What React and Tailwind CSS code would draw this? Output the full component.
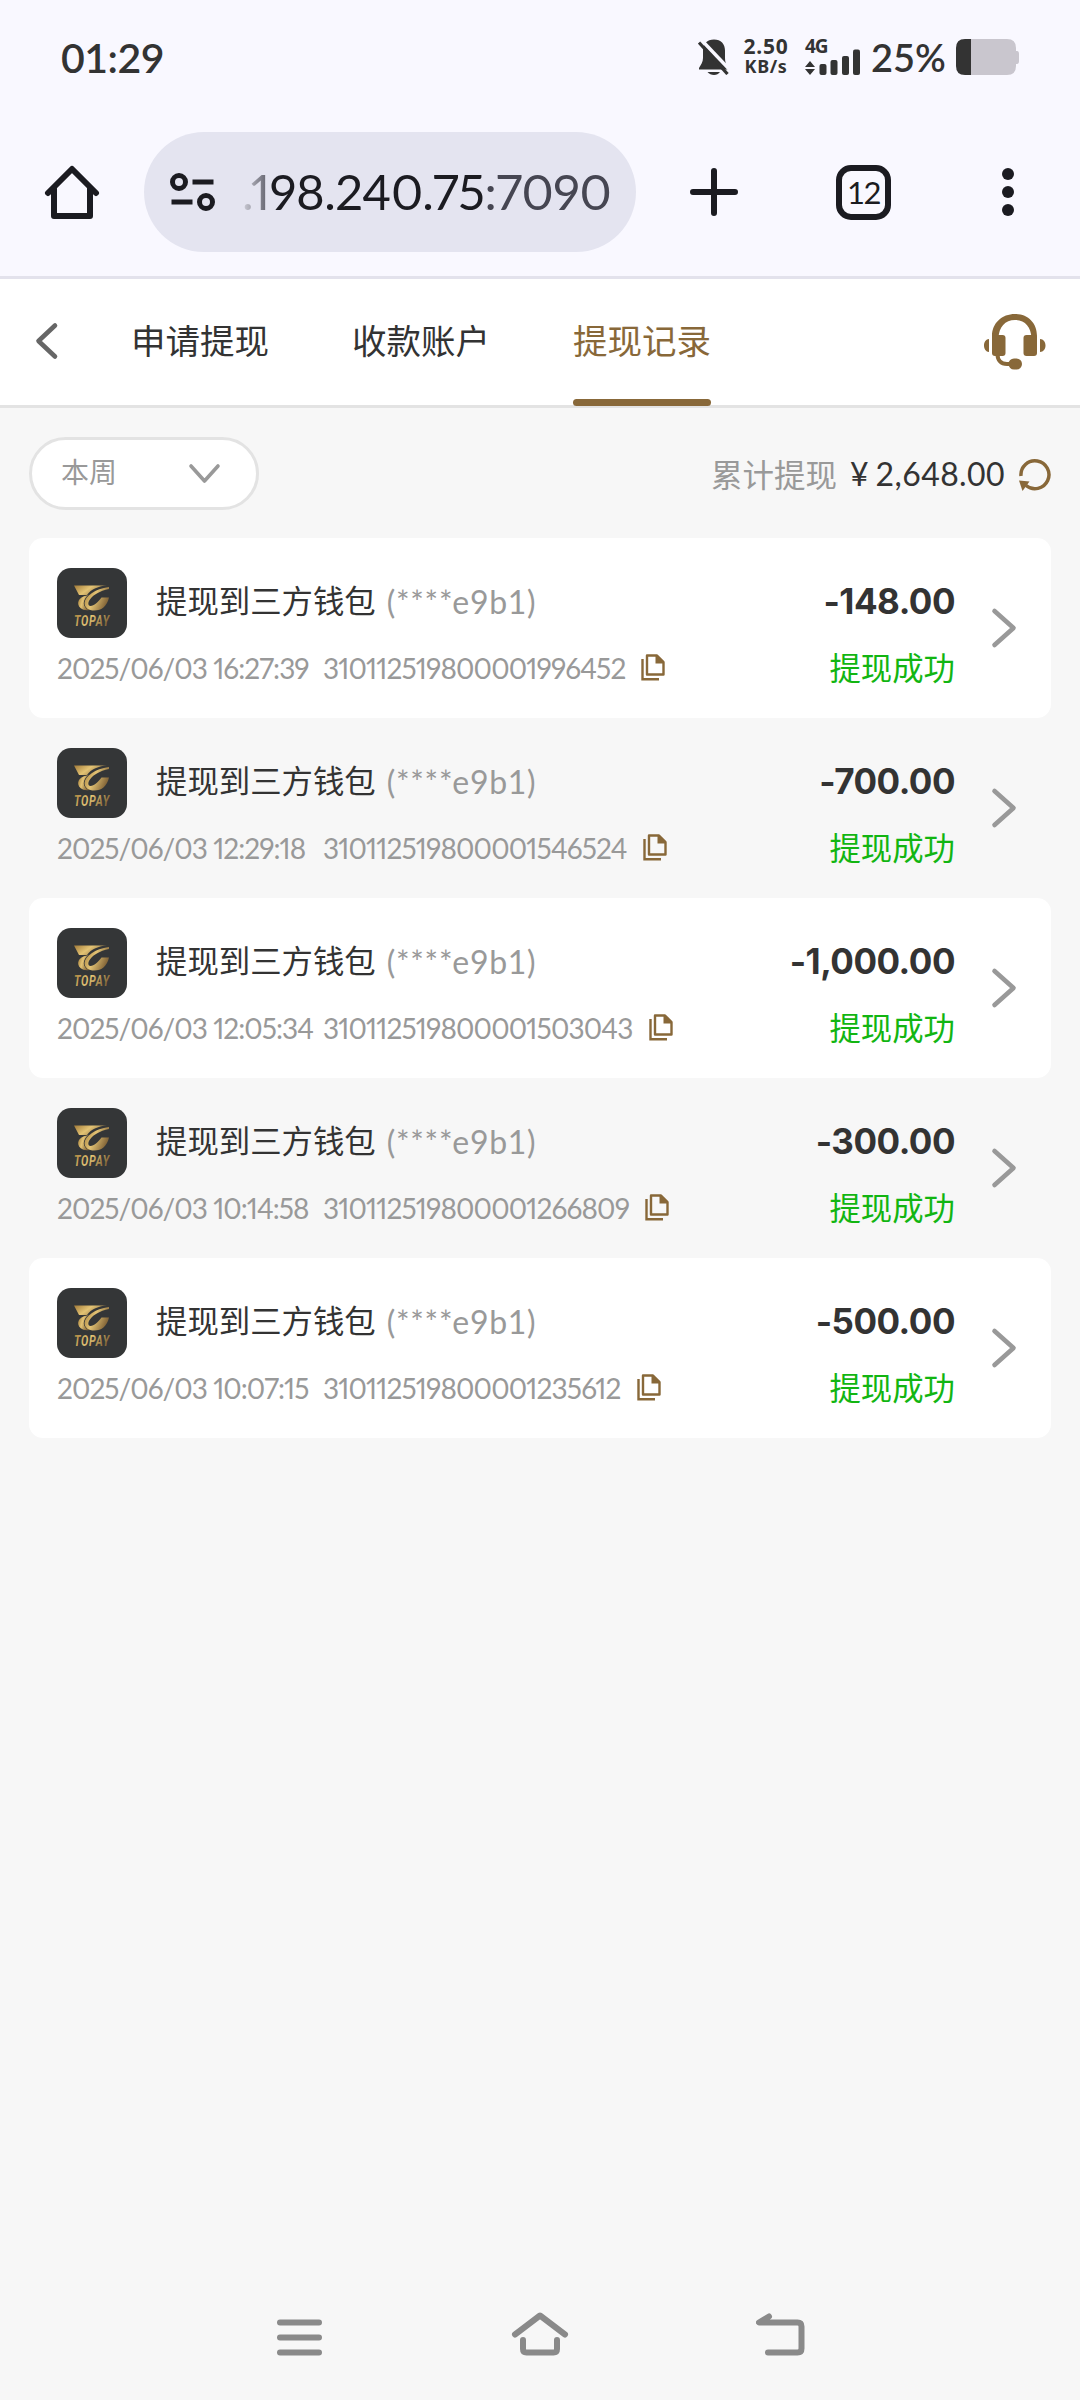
import { clsx } from "clsx";

const RECORDS = [
  { id: "310112519800001996452", time: "2025/06/03 16:27:39", amount: "-148.00" },
  { id: "310112519800001546524", time: "2025/06/03 12:29:18", amount: "-700.00" },
  { id: "310112519800001503043", time: "2025/06/03 12:05:34", amount: "-1,000.00" },
  { id: "310112519800001266809", time: "2025/06/03 10:14:58", amount: "-300.00" },
  { id: "310112519800001235612", time: "2025/06/03 10:07:15", amount: "-500.00" },
];

const TABS = ["申请提现", "收款账户", "提现记录"];

function StatusBar() {
  return (
    <div className="flex h-[114px] items-center pl-[61px] pr-[60px] text-[#333]">
      <span className="mt-px text-[41px] font-semibold leading-none tracking-[-0.5px] font-['Lato',sans-serif]">01:29</span>
      <div className="ml-auto flex h-9 items-center">
        {/* Silenciado */}
        <svg width="32" height="36" viewBox="0 0 32 36" fill="none">
          <path d="M16 0.5C9 0.5 5 5 5 11.5V19C5 23 3 25.5 1 29V30.5H30V28.5C28 25.5 27 23 27 19V11.5C27 5 23 0.5 16 0.5Z" fill="#333" />
          <path d="M9.5 33H22C20.5 35 18.5 36 16 36C13.5 36 11 35 9.5 33Z" fill="#333" />
          <path d="M3.5 1L33 32" stroke="#f9f8ff" strokeWidth="3.5" />
          <path d="M1 3.5L29.5 35" stroke="#333" strokeWidth="3.2" />
        </svg>
        <div className="ml-[13px] flex w-[46px] flex-col items-center font-['Noto_Sans',sans-serif] font-bold">
          <span className="text-[21px] leading-[19px] tracking-[0.8px]">2.50</span>
          <span className="text-[18px] leading-[21px] tracking-[0.6px]">KB/s</span>
        </div>
        <div className="ml-[16px] flex h-9 flex-col justify-between">
          <span className="h-4 text-[19px] font-bold leading-[14px] tracking-[-1px] font-['Noto_Sans',sans-serif]">4G</span>
          <svg width="55" height="26" viewBox="0 0 55 26" className="-mt-2" fill="#333">
            <path d="M5 12L10 18H0ZM5 26L10 20H0Z" />
            <rect x="14.5" y="15" width="7" height="11" rx="2" />
            <rect x="25.5" y="11" width="7" height="15" rx="2" />
            <rect x="37" y="7" width="7" height="19" rx="2" />
            <rect x="48" y="0.5" width="7" height="25.5" rx="2" />
          </svg>
        </div>
        <span className="ml-[11px] w-[77px] whitespace-nowrap text-[38px] font-semibold leading-none font-['Lato',sans-serif]">25%</span>
        <svg width="64" height="36" viewBox="0 0 64 36" className="ml-2">
          <path d="M15 0H51Q60 0 60 9V12H61Q63 12 63 15V22Q63 25 61 25H60V27Q60 36 51 36H15Z" fill="#c9c6ce" />
          <path d="M15 0H9Q0 0 0 9V27Q0 36 9 36H15Z" fill="#333" />
        </svg>
      </div>
    </div>
  );
}

function BrowserBar() {
  return (
    <div className="flex h-[162px] items-start pl-[44px] pt-[18px]">
      <div className="flex h-[120px] w-full items-center">
        <svg width="56" height="56" viewBox="0 0 56 56" fill="none" stroke="#1b1b21" strokeWidth="6" strokeLinecap="round" strokeLinejoin="round">
          <path d="M4 29L28 5L52 29" />
          <path d="M10 25V52H46V25" />
        </svg>
        <div className="ml-[44px] flex h-[120px] w-[492px] items-center rounded-full bg-[#e4e4f0] pl-[26px]">
          <svg width="46" height="40" viewBox="0 0 46 40" fill="none" stroke="#1b1b21" strokeWidth="5">
            <circle cx="9" cy="10" r="6.5" />
            <path d="M22.5 10H43.5M1.5 30H22.5" />
            <circle cx="36" cy="30" r="6.5" />
          </svg>
          <span className="-mt-[2px] ml-[26px] whitespace-nowrap text-[49px] leading-none tracking-[-0.5px] proportional-nums text-[#1b1b21] font-['Lato',sans-serif]">
            <span className="bg-linear-to-r from-[#d0d0da] to-[#5b5b66] bg-clip-text text-transparent">.1</span>
            98.240.75<span className="text-[#464652]">:7090</span>
          </span>
        </div>
        <svg width="48" height="48" viewBox="0 0 48 48" className="ml-[54px]" stroke="#1b1b21" strokeWidth="6" strokeLinecap="round">
          <path d="M24 3V45M3 24H45" />
        </svg>
        <div className="ml-[98px] flex h-[55px] w-[55px] items-center justify-center rounded-[15px] border-[6px] border-[#1b1b21]">
          <span className="text-[31px] leading-none tracking-[-1.5px] text-[#1b1b21] font-['Lato',sans-serif]">12</span>
        </div>
        <svg width="12" height="48" viewBox="0 0 12 48" className="ml-[111px]" fill="#1b1b21">
          <circle cx="6" cy="6" r="6" />
          <circle cx="6" cy="24" r="6" />
          <circle cx="6" cy="42" r="6" />
        </svg>
      </div>
    </div>
  );
}

function Headset() {
  return (
    <svg width="62" height="56" viewBox="0 0 62 56" className="-mt-px ml-auto" fill="#886839">
      <path d="M8 24V22C8 9 18 0 31 0S53 9 53 22V24H47.5C47 13 41 6 31 6S15 13 14.5 24Z" />
      <rect x="8" y="21" width="13.5" height="21" rx="3" />
      <rect x="39.5" y="21" width="13.5" height="21" rx="3" />
      <path d="M5 25V38C2 38 0 35 0 31.5S2 25 5 25ZM56 25V38C59.5 38 61.5 35 61.5 31.5S59.5 25 56 25Z" />
      <path d="M13.5 40C13.5 46.5 17 50 23 50H28" fill="none" stroke="#886839" strokeWidth="4" />
      <rect x="24.5" y="44.5" width="13.5" height="11" rx="5.5" />
    </svg>
  );
}

function TabBar() {
  return (
    <div className="flex h-[129px] items-center border-b-[3px] border-[#e3e3e3] bg-white pl-[34px] pr-[34px]">
      <svg width="26" height="38" viewBox="0 0 26 38" className="-mt-[3px]" fill="none" stroke="#666" strokeWidth="4.6" strokeLinecap="round" strokeLinejoin="round">
        <path d="M21 3.5L4.5 19L21 34.5" />
      </svg>
      <div className="ml-[71px] flex gap-[83px] self-stretch">
        {TABS.map((tab, i) => (
          <div
            key={tab}
            className={clsx(
              "relative flex items-center whitespace-nowrap text-[34.5px]",
              i === 2 ? "text-[#886839]" : "text-[#333]"
            )}
          >
            <span className="-mt-[5px]">{tab}</span>
            {i === 2 && <span className="absolute inset-x-0 -bottom-px h-[7px] rounded-full bg-[#886839]" />}
          </div>
        ))}
      </div>
      <Headset />
    </div>
  );
}

function FilterRow() {
  return (
    <div className="flex h-[73px] items-center">
      <button className="flex h-[73px] w-[230px] items-center justify-between rounded-full border-[3px] border-[#e3e3e3] bg-white pl-[29px] pr-[35px] text-[28px] text-[#999]">
        <span className="-mt-[5px]">本周</span>
        <svg width="33" height="22" viewBox="0 0 33 22" fill="none" stroke="#999" strokeWidth="3.6" strokeLinecap="round" strokeLinejoin="round">
          <path d="M3 3L16.5 18L30 3" />
        </svg>
      </button>
      <span className="ml-auto text-[31.5px] text-[#999]">累计提现</span>
      <span className="ml-[13px] text-[32px] text-[#333] font-['Lato',sans-serif]">¥</span>
      <span className="ml-[7px] text-[32px] tracking-[0.4px] text-[#333] font-['Lato',sans-serif]">2,648.00</span>
      <svg width="34" height="34" viewBox="0 0 34 34" className="-mr-px ml-[13px] mt-[2px]" fill="none">
        <path d="M3 18A14 14 0 1 1 8 27.5" stroke="#886839" strokeWidth="3.5" />
        <path d="M1 22.5L11.5 23.5L4.5 33Z" fill="#886839" />
      </svg>
    </div>
  );
}

function TopayLogo() {
  return (
    <svg width="70" height="70" viewBox="0 0 70 70">
      <defs>
        <linearGradient id="gold" x1="0" y1="0" x2="1" y2="0.4">
          <stop offset="0" stopColor="#a07a38" />
          <stop offset="0.5" stopColor="#e3c374" />
          <stop offset="1" stopColor="#86683a" />
        </linearGradient>
      </defs>
      <rect width="70" height="70" rx="14" fill="#343637" />
      <path d="M17 17.5H50C42 18 34 21 30 27H22Z" fill="url(#gold)" />
      <path d="M30 27.5C21 29 19 36 23.5 40C26 42 29 42.5 32 42C25 39 25 32 32 26.5Z" fill="url(#gold)" />
      <path d="M52 19C38 21 28 28 27.5 35C27.5 40 32 42.5 37 42.5C45 42.5 50 38 52 29.5H44.5C41 34 37 38 33.5 38C28 37 33 25 52 21Z" fill="url(#gold)" />
      <text
        transform="translate(17 57.5) scale(0.72 1)"
        textLength="49"
        fontSize="15"
        fontWeight="700"
        fontStyle="italic"
        fontFamily="Roboto, sans-serif"
        fill="url(#gold)"
      >
        TOPAY
      </text>
    </svg>
  );
}

function CopyIcon() {
  return (
    <svg width="24" height="27" viewBox="0 0 24 27" fill="none" stroke="#886839" strokeWidth="2.4">
      <path d="M1.5 5V25.2H18" />
      <path d="M6 1.5H16L22.5 8V20.5H6Z" strokeLinejoin="round" />
      <path d="M14.5 1.5V9.5H22.5V8L16 1.5Z" fill="#886839" stroke="none" />
    </svg>
  );
}

function RecordRow({ record, striped }) {
  return (
    <div className={clsx("flex h-[180px] items-center rounded-[14px] pl-[28px] pr-[33px]", striped && "bg-white")}>
      <div className="-mt-px flex h-[120px] flex-col">
        <div className="flex h-[70px] items-center">
          <TopayLogo />
          <span className="-mt-[5px] ml-[29px] text-[31.4px] leading-none text-[#333]">提现到三方钱包</span>
          <span className="-mt-[2px] ml-[11px] text-[32px] leading-none tracking-[0.7px] text-[#999] font-['Lato',sans-serif]">(****e9b1)</span>
        </div>
        <div className="mt-[13px] flex items-center whitespace-nowrap text-[28px] leading-[34px] proportional-nums text-[#999] font-['Lato',sans-serif]">
          <span className="w-[252px] tracking-[-0.95px]">{record.time}</span>
          <span className="ml-[14px] mr-[16px] tracking-[-0.85px]">{record.id}</span>
          <CopyIcon />
        </div>
      </div>
      <div className="ml-auto flex h-[120px] flex-col items-end">
        <span className="mt-[11px] text-[35px] font-bold leading-[44px] tracking-[-0.5px] text-[#333] font-['Inter',sans-serif]">{record.amount}</span>
        <span className="mt-[22px] text-[31.4px] leading-[44px] text-[#12b512]">提现成功</span>
      </div>
      <svg width="28" height="42" viewBox="0 0 28 42" className="ml-[35px]" fill="none" stroke="#999" strokeWidth="4.6" strokeLinecap="round" strokeLinejoin="round">
        <path d="M4.5 4L23.5 21L4.5 38" />
      </svg>
    </div>
  );
}

function NavBar() {
  return (
    <div className="mt-auto flex h-[126px] items-center justify-center gap-[186px] pl-[2px]">
      <svg width="48" height="50" viewBox="0 0 48 50" stroke="#8a8a8a" strokeWidth="6" strokeLinecap="round">
        <path d="M4 10.5H43M4 25.5H43M4 40.5H43" />
      </svg>
      <svg width="60" height="50" viewBox="0 0 60 50" fill="none" stroke="#8a8a8a" strokeWidth="6" strokeLinecap="round" strokeLinejoin="round">
        <path d="M5 22.5L30 3.5L55 22.5" />
        <path d="M13 28V37Q13 40.5 16.5 40.5H43.5Q47 40.5 47 37V28" />
      </svg>
      <svg width="50" height="50" viewBox="0 0 50 50" fill="none" stroke="#8a8a8a" strokeWidth="6" strokeLinecap="round" strokeLinejoin="round">
        <path d="M13 4.5L3 10.5H41.5Q45.5 10.5 45.5 14.5V36.5Q45.5 40.5 41.5 40.5H12" />
      </svg>
    </div>
  );
}

export default function App() {
  return (
    <div className="flex h-[2400px] w-[1080px] flex-col bg-[#f7f7f7] font-['Noto_Sans_CJK_SC',sans-serif]">
      <header className="border-b-[3px] border-[#e3e2ec] bg-[#f9f8ff]">
        <StatusBar />
        <BrowserBar />
      </header>
      <TabBar />
      <main className="px-[29px] pt-[29px]">
        <FilterRow />
        {/* Lista de retiros */}
        <div className="mt-[28px]">
          {RECORDS.map((record, i) => (
            <RecordRow key={record.id} record={record} striped={i % 2 === 0} />
          ))}
        </div>
      </main>
      <NavBar />
    </div>
  );
}
